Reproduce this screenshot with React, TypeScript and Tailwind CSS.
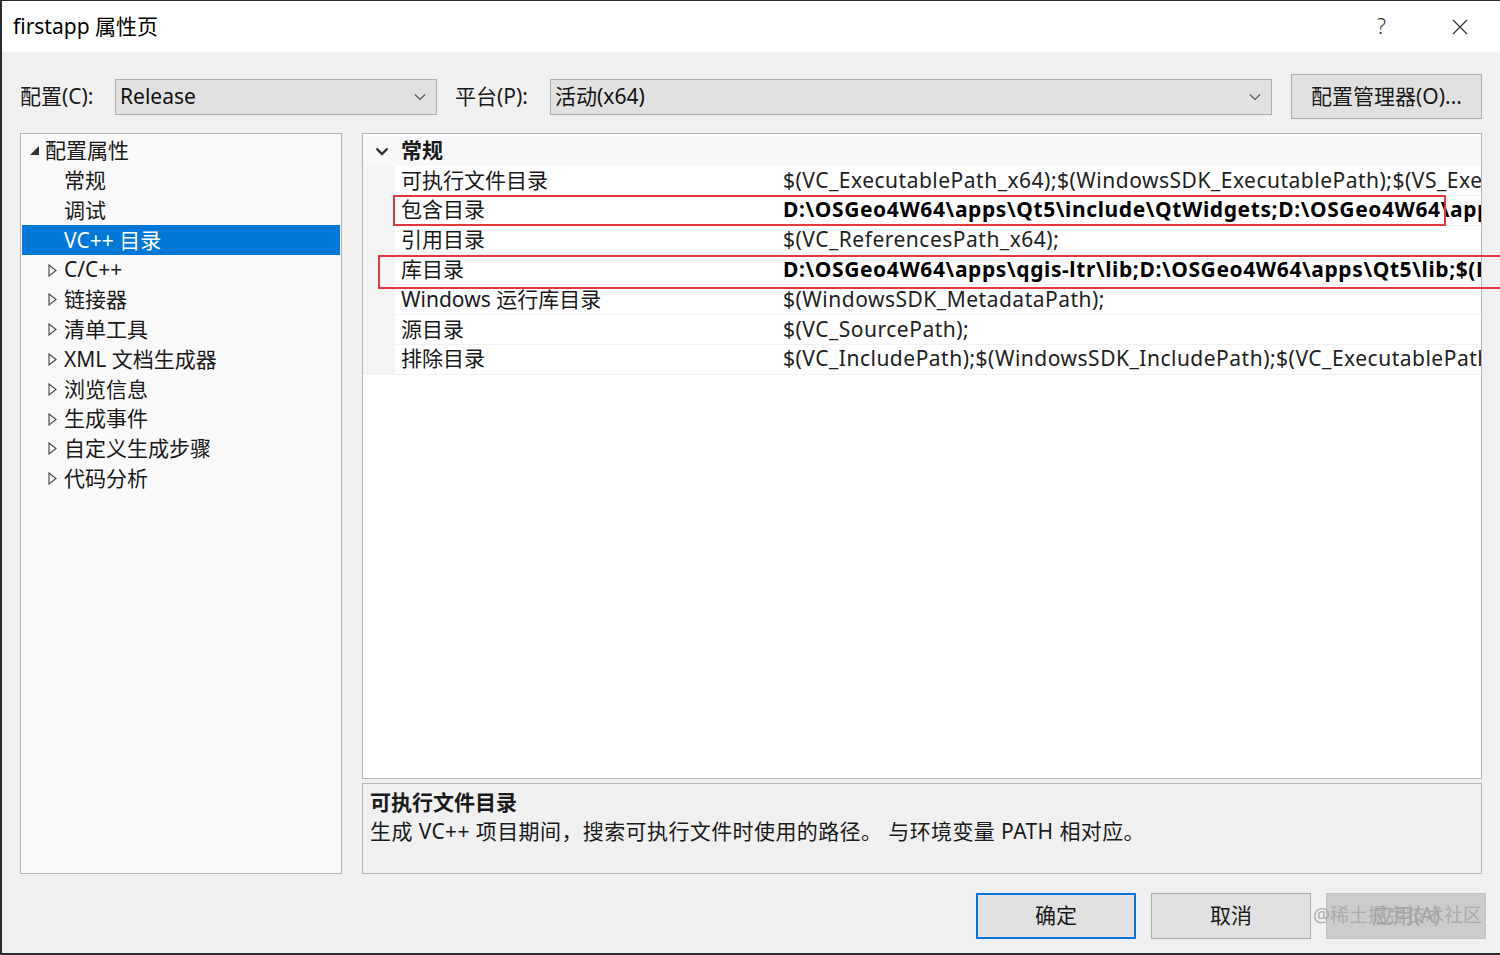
import React from "react";

const font = { fontFamily: '"Noto Sans", "Noto Sans CJK SC", sans-serif' };

const treeItems: { label: string; level: number; kind: "open" | "closed" | "none"; selected?: boolean }[] = [
  { label: "配置属性", level: 0, kind: "open" },
  { label: "常规", level: 1, kind: "none" },
  { label: "调试", level: 1, kind: "none" },
  { label: "VC++ 目录", level: 1, kind: "none", selected: true },
  { label: "C/C++", level: 1, kind: "closed" },
  { label: "链接器", level: 1, kind: "closed" },
  { label: "清单工具", level: 1, kind: "closed" },
  { label: "XML 文档生成器", level: 1, kind: "closed" },
  { label: "浏览信息", level: 1, kind: "closed" },
  { label: "生成事件", level: 1, kind: "closed" },
  { label: "自定义生成步骤", level: 1, kind: "closed" },
  { label: "代码分析", level: 1, kind: "closed" },
];

const props: { name: string; value: string; bold?: boolean }[] = [
  { name: "可执行文件目录", value: "$(VC_ExecutablePath_x64);$(WindowsSDK_ExecutablePath);$(VS_Execu" },
  { name: "包含目录", value: "D:\\OSGeo4W64\\apps\\Qt5\\include\\QtWidgets;D:\\OSGeo4W64\\app", bold: true },
  { name: "引用目录", value: "$(VC_ReferencesPath_x64);" },
  { name: "库目录", value: "D:\\OSGeo4W64\\apps\\qgis-ltr\\lib;D:\\OSGeo4W64\\apps\\Qt5\\lib;$(L", bold: true },
  { name: "Windows 运行库目录", value: "$(WindowsSDK_MetadataPath);" },
  { name: "源目录", value: "$(VC_SourcePath);" },
  { name: "排除目录", value: "$(VC_IncludePath);$(WindowsSDK_IncludePath);$(VC_ExecutablePath_" },
];

function Chevron() {
  return (
    <svg width="12" height="8" viewBox="0 0 12 8">
      <path d="M1 1.5 L6 6.5 L11 1.5" fill="none" stroke="#555" strokeWidth="1.2" />
    </svg>
  );
}

function Select({ value, width }: { value: string; width: string }) {
  return (
    <div className={`${width} h-[36px] bg-[#e1e1e1] border border-[#adadad] flex items-center justify-between pl-[4px] pr-[10px]`}>
      <span className="text-[21px] text-[#111]">{value}</span>
      <Chevron />
    </div>
  );
}

export default function App() {
  return (
    <div className="relative w-[1500px] h-[955px] flex flex-col border-l-2 border-b-2 border-t border-[#2a2a2a] overflow-hidden text-[#1a1a1a]" style={font}>
      {/* title bar */}
      <div className="h-[51px] bg-white flex items-center justify-between pl-[11px] pr-[32px] shrink-0">
        <span className="text-[21px] text-black">firstapp 属性页</span>
        <div className="flex items-center gap-[66px]">
          <span className="text-[21px] text-[#333] font-light">?</span>
          <svg width="16" height="16" viewBox="0 0 16 16">
            <path d="M1 1 L15 15 M15 1 L1 15" stroke="#333" strokeWidth="1.2" />
          </svg>
        </div>
      </div>

      <div className="flex-1 bg-[#f0f0f0] flex flex-col pl-[18px] pr-[18px]">
        {/* configuration row */}
        <div className="h-[45px] mt-[22px] flex items-center">
          <span className="text-[21px] w-[95px]">配置(C):</span>
          <Select value="Release" width="w-[322px]" />
          <span className="text-[21px] ml-[18px] w-[95px]">平台(P):</span>
          <Select value="活动(x64)" width="w-[722px]" />
          <div className="ml-[19px] w-[191px] h-[45px] bg-[#e1e1e1] border border-[#adadad] flex items-center justify-center text-[21px]">
            配置管理器(O)...
          </div>
        </div>

        {/* main area */}
        <div className="mt-[14px] h-[741px] flex gap-[20px]">
          {/* tree */}
          <div className="w-[324px] h-full bg-[#f9f9f9] border border-[#b4b4b4] pt-[2px] px-[1px]">
            {treeItems.map((t) => (
              <div
                key={t.label}
                className={`h-[29.8px] flex items-center ${t.selected ? "bg-[#0078d7] text-white" : ""}`}
              >
                <div className={`${t.level === 0 ? "w-[23px] pl-[7px]" : "w-[42px] pl-[26px]"} flex items-center`}>
                  {t.kind === "open" && (
                    <svg width="11" height="11" viewBox="0 0 11 11">
                      <path d="M10 1 L10 10 L1 10 Z" fill="#333" />
                    </svg>
                  )}
                  {t.kind === "closed" && (
                    <svg width="9" height="13" viewBox="0 0 9 13">
                      <path d="M1 1 L8 6.5 L1 12 Z" fill="none" stroke="#444" strokeWidth="1.1" />
                    </svg>
                  )}
                </div>
                <span className="text-[21px] whitespace-nowrap">{t.label}</span>
              </div>
            ))}
          </div>

          {/* property grid + description */}
          <div className="w-[1120px] h-full flex flex-col gap-[4px]">
            <div className="h-[646px] bg-white border border-[#b4b4b4] pt-[2px] overflow-hidden">
              <div className="h-[30px] flex items-center bg-[#f8f8fa]">
                <div className="w-[38px] flex justify-center">
                  <svg width="14" height="9" viewBox="0 0 14 9">
                    <path d="M1.5 1.5 L7 7 L12.5 1.5" fill="none" stroke="#333" strokeWidth="2.4" />
                  </svg>
                </div>
                <span className="text-[21px] font-bold">常规</span>
              </div>
              {props.map((p) => (
                <div key={p.name} className="h-[29.8px] flex">
                  <div className="w-[32px] h-full bg-[#f4f4f4] shrink-0" />
                  <div className="w-[388px] h-full flex items-center pl-[6px] border-b border-[#f2f2f2] shrink-0">
                    <span className="text-[21px] whitespace-nowrap">{p.name}</span>
                  </div>
                  <div className="flex-1 h-full flex items-center border-b border-[#f2f2f2] overflow-hidden">
                    <span
                      className={`whitespace-nowrap ${p.bold ? "text-[21px] tracking-[0.6px] font-bold text-black" : "text-[21px] tracking-[0.5px] text-[#222]"}`}
                    >
                      {p.value}
                    </span>
                  </div>
                </div>
              ))}
            </div>
            <div className="h-[91px] bg-[#f0f0f0] border border-[#b4b4b4] pl-[7px] pt-[3px]">
              <div className="text-[21px] font-bold leading-[30px]">可执行文件目录</div>
              <div className="text-[21px] tracking-[0.4px] leading-[28px]">生成 VC++ 项目期间，搜索可执行文件时使用的路径。 与环境变量 PATH 相对应。</div>
            </div>
          </div>
        </div>

        {/* buttons */}
        <div className="mt-[19px] flex justify-end gap-[15px] mr-[-4px]">
          <div className="w-[160px] h-[46px] bg-[#e1e1e1] border-2 border-[#0078d7] flex items-center justify-center text-[21px]">确定</div>
          <div className="w-[160px] h-[46px] bg-[#e1e1e1] border border-[#adadad] flex items-center justify-center text-[21px]">取消</div>
          <div className="relative w-[160px] h-[46px] bg-[#cccccc] border border-[#bfbfbf] flex items-center justify-center text-[21px] text-[#a3a3a3]">
            应用(A)
            {/* watermark */}
            <span className="absolute left-[-14px] top-[9px] text-[19px] leading-[24px] text-[#a8a8a8] opacity-90 whitespace-nowrap">@稀土掘金技术社区</span>
          </div>
        </div>
      </div>

      {/* annotation boxes */}
      <div className="absolute left-[391px] top-[194px] w-[1053px] h-[31px] border-2 border-[#e0393e]" />
      <div className="absolute left-[376px] top-[254px] w-[1124px] h-[34px] border-2 border-[#e0393e]" />
    </div>
  );
}
